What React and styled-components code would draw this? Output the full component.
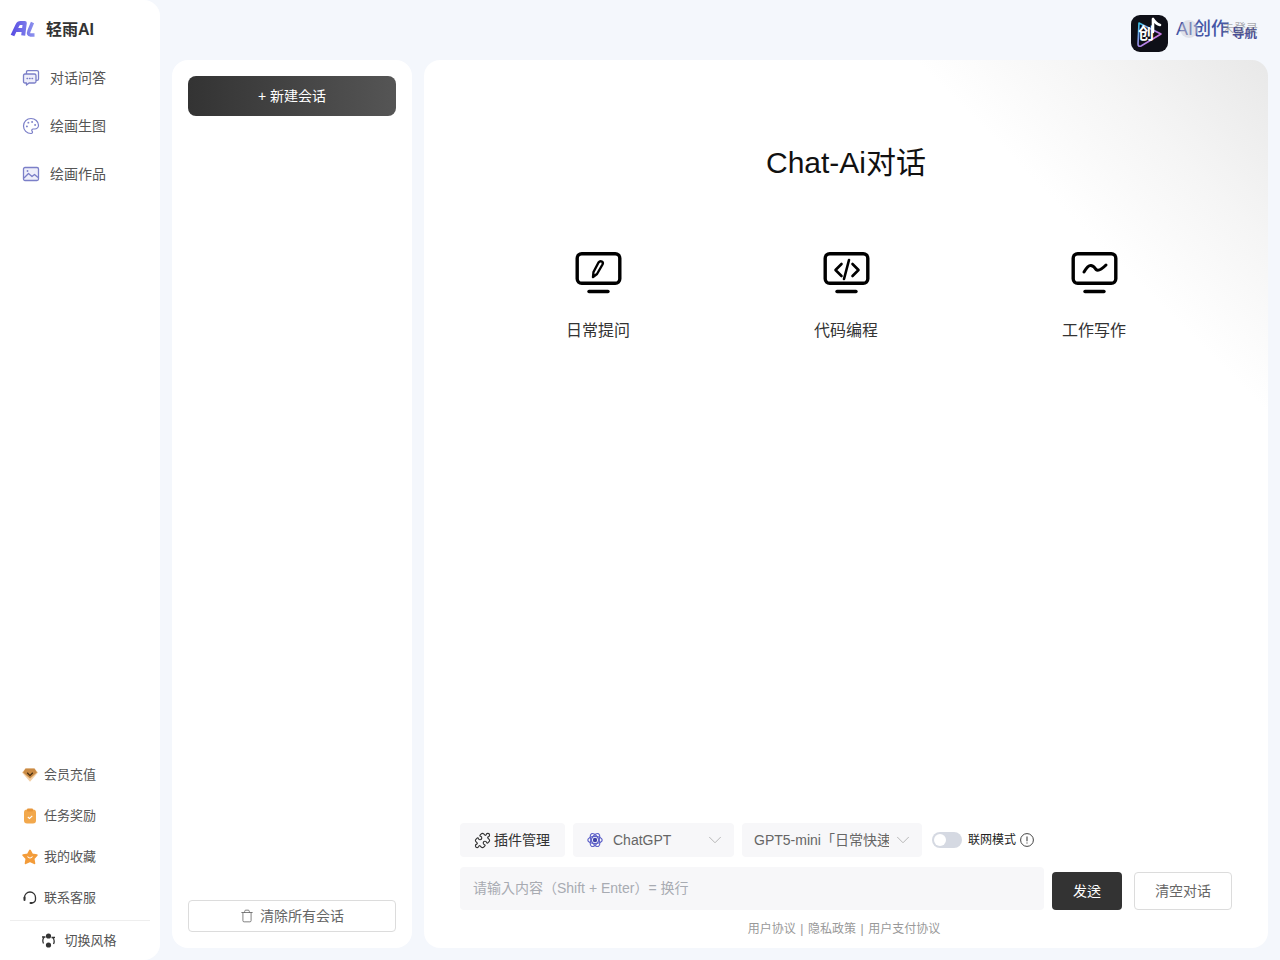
import React, { useState } from "react";
import styled, { createGlobalStyle } from "styled-components";
import { Puzzle, ChevronDown, Trash, Palette } from "lucide-react";

const GlobalStyle = createGlobalStyle`
  * {
    box-sizing: border-box;
  }
  html, body {
    margin: 0;
    padding: 0;
    height: 100%;
    background: #f4f7fc;
    font-family: "Liberation Sans", "Noto Sans CJK KR", sans-serif;
    line-height: 1.5;
  }
`;

const Page = styled.div`
  display: flex;
  width: 1280px;
  height: 960px;
  overflow: hidden;
  background: #f4f7fc;
`;

const Sidebar = styled.aside`
  display: flex;
  flex-direction: column;
  width: 160px;
  height: 100%;
  background: #fff;
  border-radius: 0 16px 16px 0;
`;

const Brand = styled.div`
  display: flex;
  align-items: center;
  gap: 10px;
  height: 54px;
  padding: 4px 0 0 10px;
  font-size: 16px;
  font-weight: 700;
  color: #333;
  span {
    padding-top: 1px;
  }
`;

const NavList = styled.nav`
  display: flex;
  flex-direction: column;
  flex: 1;
`;

const NavItem = styled.a`
  display: flex;
  align-items: center;
  gap: 10px;
  height: 48px;
  padding-left: 22px;
  font-size: 14px;
  color: #555;
  svg {
    color: #7b7fc8;
  }
`;

const BottomList = styled.div`
  display: flex;
  flex-direction: column;
`;

const BottomItem = styled.a`
  display: flex;
  align-items: center;
  gap: 6px;
  height: 41px;
  padding-left: 22px;
  font-size: 13px;
  color: #555;
`;

const Divider = styled.div`
  height: 1px;
  margin: 2px 10px 0;
  background: #eeeeee;
`;

const StyleSwitch = styled.a`
  display: flex;
  align-items: center;
  justify-content: center;
  gap: 8px;
  height: 39px;
  padding-right: 2px;
  font-size: 13px;
  color: #555;
`;

const Content = styled.main`
  display: flex;
  flex-direction: column;
  flex: 1;
  min-width: 0;
  padding: 0 12px 12px;
`;

const TopBar = styled.header`
  display: flex;
  align-items: center;
  justify-content: flex-end;
  height: 60px;
  padding: 7px 10px 0 0;
  flex-shrink: 0;
`;

const NavLogo = styled.div`
  position: relative;
  display: flex;
  align-items: center;
  gap: 8px;
`;

const LogoTile = styled.div`
  position: relative;
  display: flex;
  align-items: center;
  justify-content: center;
  width: 37px;
  height: 37px;
  border-radius: 9px;
  background: #0e0f17;
`;

const LogoChar = styled.span`
  position: absolute;
  left: 7px;
  top: 10px;
  font-size: 16px;
  font-weight: 700;
  line-height: 18px;
  color: #fff;
`;

const LogoText = styled.span`
  display: flex;
  align-items: baseline;
  width: 82px;
  margin-bottom: 8px;
  font-size: 18px;
  font-weight: 500;
  color: #4657a6;
  small {
    position: relative;
    top: 3px;
    margin-left: 3px;
    font-size: 12.5px;
    font-weight: 700;
    color: #4a4f96;
  }
`;

const GhostLogin = styled.div`
  position: absolute;
  right: 0;
  top: 5px;
  display: flex;
  align-items: center;
  gap: 24px;
  font-size: 12px;
  line-height: 14px;
  color: rgba(120, 120, 130, 0.65);
  i {
    width: 18px;
    height: 18px;
    border-radius: 50%;
    background: rgba(200, 200, 210, 0.45);
  }
`;

const Panels = styled.div`
  display: flex;
  flex: 1;
  gap: 12px;
  min-height: 0;
`;

const HistoryPanel = styled.section`
  display: flex;
  flex-direction: column;
  justify-content: space-between;
  width: 240px;
  padding: 16px;
  background: #fff;
  border-radius: 16px;
`;

const NewChat = styled.button`
  height: 40px;
  border: none;
  border-radius: 8px;
  background: linear-gradient(90deg, #333 0%, #555 100%);
  color: #fff;
  font: inherit;
  font-size: 14px;
`;

const ClearAll = styled.button`
  display: flex;
  align-items: center;
  justify-content: center;
  gap: 6px;
  height: 32px;
  border: 1px solid #dcdcdc;
  border-radius: 4px;
  background: #fff;
  color: #666;
  font: inherit;
  font-size: 14px;
`;

const ChatPanel = styled.section`
  display: flex;
  flex-direction: column;
  flex: 1;
  min-width: 0;
  padding: 0 36px 10px;
  border-radius: 16px;
  background: linear-gradient(225deg, #e8e8e8 0, #f5f5f5 130px, #fff 250px);
`;

const Title = styled.h1`
  margin: 84px 0 0;
  font-size: 30px;
  line-height: 38px;
  font-weight: 400;
  text-align: center;
  color: #111;
`;

const Prompts = styled.div`
  display: flex;
  justify-content: center;
  gap: 184px;
  margin-top: 69px;
  flex: 1;
`;

const Prompt = styled.div`
  display: flex;
  flex-direction: column;
  align-items: center;
  gap: 20px;
  width: 64px;
  height: 100px;
  font-size: 16px;
  line-height: 24px;
  color: #333;
  white-space: nowrap;
`;

const Toolbar = styled.div`
  display: flex;
  align-items: center;
  gap: 8px;
  height: 34px;
`;

const PluginButton = styled.button`
  display: flex;
  align-items: center;
  gap: 3px;
  width: 105px;
  height: 34px;
  padding: 0 0 0 14px;
  border: none;
  border-radius: 4px;
  background: #f7f7f9;
  color: #333;
  font: inherit;
  font-size: 14px;
`;

const Select = styled.div`
  display: flex;
  align-items: center;
  width: ${({ $width }) => $width}px;
  height: 34px;
  padding: 0 8px 0 12px;
  border-radius: 4px;
  background: #f7f7f9;
  color: #666;
  font-size: 14px;
  span {
    flex: 1;
    min-width: 0;
    overflow: hidden;
    white-space: nowrap;
  }
  svg.chev {
    margin-left: 3px;
    color: #aaa;
    flex-shrink: 0;
  }
  svg.brand {
    margin: 0 10px 0 2px;
  }
`;

const Toggle = styled.button`
  display: flex;
  align-items: center;
  width: 30px;
  height: 16px;
  margin-left: 2px;
  padding: 2px;
  border: none;
  border-radius: 8px;
  background: ${({ $on }) => ($on ? "#333" : "#d5d9e2")};
  justify-content: ${({ $on }) => ($on ? "flex-end" : "flex-start")};
  i {
    width: 12px;
    height: 12px;
    border-radius: 50%;
    background: #fff;
  }
`;

const ToggleLabel = styled.span`
  display: flex;
  align-items: center;
  gap: 4px;
  margin-left: -2px;
  font-size: 12px;
  color: #222;
`;

const InputRow = styled.div`
  display: flex;
  align-items: flex-end;
  margin-top: 10px;
`;

const PromptInput = styled.input`
  flex: 1;
  min-width: 0;
  height: 43px;
  padding: 0 13px 1px;
  border: none;
  border-radius: 4px;
  outline: none;
  background: #f7f7f9;
  font: inherit;
  font-size: 14px;
  color: #333;
  &::placeholder {
    color: #a8abb2;
  }
`;

const SendButton = styled.button`
  width: 70px;
  height: 38px;
  margin-left: 8px;
  border: none;
  border-radius: 4px;
  background: #333;
  color: #fff;
  font: inherit;
  font-size: 14px;
`;

const ClearButton = styled.button`
  width: 98px;
  height: 38px;
  margin-left: 12px;
  border: 1px solid #dcdcdc;
  border-radius: 4px;
  background: #fff;
  color: #666;
  font: inherit;
  font-size: 14px;
`;

const Footer = styled.div`
  display: flex;
  justify-content: center;
  margin: 10px 4px 0 0;
  font-size: 12px;
  line-height: 18px;
  color: #999;
  i {
    margin: 0 4.5px;
    font-style: normal;
  }
`;

const BrandMark = () => (
  <svg width="26" height="18" viewBox="0 0 26 18" fill="none" strokeLinejoin="round">
    <defs>
      <linearGradient id="bm" gradientUnits="userSpaceOnUse" x1="0" y1="0" x2="26" y2="0">
        <stop offset="0" stopColor="#5548e2" />
        <stop offset="1" stopColor="#8f96ee" />
      </linearGradient>
    </defs>
    <path d="M2.5 15.5 L7.5 5 Q8.5 3 10.5 3 L14.8 3 L13.2 15.5 M6.5 10 H13.6" stroke="url(#bm)" strokeWidth="4" />
    <path d="M22.5 2.5 L19 11 Q17.5 15 20.5 15 L24.5 15" stroke="url(#bm)" strokeWidth="3.4" />
  </svg>
);

const AppIcon = () => (
  <svg width="37" height="37" viewBox="0 0 37 37" fill="none">
    <defs>
      <linearGradient id="ai" x1="0" y1="0" x2="1" y2="1">
        <stop offset="0" stopColor="#38c6e8" />
        <stop offset="0.6" stopColor="#b77fe8" />
        <stop offset="1" stopColor="#e56fd0" />
      </linearGradient>
    </defs>
    <path d="M8 8 L30 19 L10 31 Q7 32 7 29 Z" stroke="url(#ai)" strokeWidth="1.6" strokeLinejoin="round" />
    <path d="M22 4 L22 17 M22 4 Q25 9 29 10" stroke="#fff" strokeWidth="2.6" strokeLinecap="round" />
  </svg>
);

const MonitorIcon = ({ children }) => (
  <svg width="48" height="48" viewBox="0 0 48 48" fill="none" stroke="#000" strokeWidth="3.4" strokeLinecap="round" strokeLinejoin="round">
    <rect x="3.2" y="2.7" width="42.6" height="29.6" rx="4.5" />
    <path d="M15 40.5 H34" />
    {children}
  </svg>
);

const ChatIcon = () => (
  <svg width="18" height="18" viewBox="0 0 18 18" fill="none" stroke="currentColor" strokeWidth="1.3" strokeLinejoin="round">
    <path d="M4.5 5 V3 Q4.5 1.7 5.8 1.7 H15 Q16.5 1.7 16.5 3 V10 Q16.5 11.3 15 11.3 H14" />
    <path d="M3 5 H12.5 Q14 5 14 6.5 V12.5 Q14 14 12.5 14 H7 L4.5 16 V14 H3 Q1.5 14 1.5 12.5 V6.5 Q1.5 5 3 5 Z" fill="#eeeefa" />
    <path d="M5 9.5 H5.6 M7.5 9.5 H8.1 M10 9.5 H10.6" strokeLinecap="round" />
  </svg>
);

const PictureIcon = () => (
  <svg width="18" height="18" viewBox="0 0 18 18" fill="none" stroke="currentColor" strokeWidth="1.3" strokeLinejoin="round">
    <rect x="1.5" y="2.5" width="15" height="13" rx="1.5" fill="#eeeefa" />
    <path d="M2 13 L6.5 8.5 L10 11.5 L12.5 9.5 L16 12.5" />
    <circle cx="5.5" cy="6" r="0.9" fill="currentColor" stroke="none" />
  </svg>
);

const DiamondIcon = () => (
  <svg width="16" height="14" viewBox="0 0 16 14">
    <path d="M3.5 0.5 H12.5 L16 4.5 L8 13.8 L0 4.5 Z" fill="#f3cfa4" />
    <path d="M3.5 0.5 H12.5 L15 4.5 L8 10.5 L1 4.5 Z" fill="#c98a44" />
    <path d="M5.2 4.8 L8 7.6 L10.8 4.8" fill="none" stroke="#4a3013" strokeWidth="1.3" />
  </svg>
);

const TaskIcon = () => (
  <svg width="16" height="16" viewBox="0 0 16 16">
    <rect x="2" y="1.5" width="12" height="14" rx="3" fill="#f2a84c" />
    <rect x="5" y="0.5" width="6" height="3" rx="1" fill="#e7963a" />
    <path d="M5.8 9 L7.5 10.5 L10.3 7.8" fill="none" stroke="#fff" strokeWidth="1.1" />
  </svg>
);

const StarIcon = () => (
  <svg width="16" height="16" viewBox="0 0 16 16">
    <path d="M8 1.5 L10.2 5.4 L14.8 6.2 L11.6 9.6 L12.4 14.3 L8 12.3 L3.6 14.3 L4.4 9.6 L1.2 6.2 L5.8 5.4 Z" fill="#f39c3a" stroke="#f39c3a" strokeWidth="1.8" strokeLinejoin="round" />
    <path d="M5.5 7.5 Q8 10.5 10.5 7.5" fill="none" stroke="#fff" strokeWidth="1.1" />
  </svg>
);

const HeadsetIcon = () => (
  <svg width="16" height="16" viewBox="0 0 16 16" fill="none" stroke="#333" strokeWidth="1.3" strokeLinecap="round">
    <path d="M2.5 9 V7.5 A5.5 5.5 0 0 1 13.5 7.5 V9.5 Q13.5 12.5 9.5 13" />
    <path d="M2.5 7.5 V10" strokeWidth="2" />
    <path d="M9.5 13 H8.5" strokeWidth="2" />
  </svg>
);

const SwitchIcon = () => (
  <svg width="15" height="15" viewBox="0 0 15 15" fill="none">
    <circle cx="7.5" cy="3" r="2.6" fill="#333" />
    <circle cx="7.5" cy="12" r="2.6" fill="#333" />
    <path d="M3.2 4 Q0.8 7 2.5 10.5 M11.8 4.5 Q14.2 8 12.5 11" stroke="#333" strokeWidth="1.3" />
    <path d="M1 4 H4.5 M10.5 4.5 H14" stroke="#333" strokeWidth="1.3" />
  </svg>
);

const ModelIcon = () => (
  <svg className="brand" width="16" height="16" viewBox="0 0 16 16" fill="none" stroke="#5f63c9" strokeWidth="1.2">
    {[0, 60, 120].map((deg) => (
      <ellipse key={deg} cx="8" cy="8" rx="7.2" ry="3.6" transform={`rotate(${deg} 8 8)`} />
    ))}
    <circle cx="8" cy="8" r="2.2" fill="#3f43a8" stroke="none" />
  </svg>
);

const InfoIcon = () => (
  <svg width="14" height="14" viewBox="0 0 14 14" fill="none" stroke="#444">
    <circle cx="7" cy="7" r="6.4" />
    <path d="M7 3.5 V8.3 M7 9.6 V10.6" strokeWidth="1.1" />
  </svg>
);

const App = () => {
  const [online, setOnline] = useState(false);

  return (
    <Page>
      <GlobalStyle />
      <Sidebar>
        <Brand>
          <BrandMark />
          <span>轻雨AI</span>
        </Brand>
        <NavList>
          <NavItem>
            <ChatIcon />
            对话问答
          </NavItem>
          <NavItem>
            <Palette size={18} strokeWidth={1.6} />
            绘画生图
          </NavItem>
          <NavItem>
            <PictureIcon />
            绘画作品
          </NavItem>
        </NavList>
        <BottomList>
          <BottomItem>
            <DiamondIcon />
            会员充值
          </BottomItem>
          <BottomItem>
            <TaskIcon />
            任务奖励
          </BottomItem>
          <BottomItem>
            <StarIcon />
            我的收藏
          </BottomItem>
          <BottomItem>
            <HeadsetIcon />
            联系客服
          </BottomItem>
          <Divider />
          <StyleSwitch>
            <SwitchIcon />
            切换风格
          </StyleSwitch>
        </BottomList>
      </Sidebar>
      <Content>
        <TopBar>
          <NavLogo>
            <LogoTile>
              <AppIcon />
              <LogoChar>创</LogoChar>
            </LogoTile>
            <LogoText>
              AI创作<small>导航</small>
            </LogoText>
            <GhostLogin>
              <i />
              未登录
            </GhostLogin>
          </NavLogo>
        </TopBar>
        <Panels>
          <HistoryPanel>
            <NewChat>+ 新建会话</NewChat>
            <ClearAll>
              <Trash size={14} strokeWidth={1.4} />
              清除所有会话
            </ClearAll>
          </HistoryPanel>
          <ChatPanel>
            <Title>Chat-Ai对话</Title>
            <Prompts>
              <Prompt>
                <MonitorIcon>
                  <path d="M24.5 11.5 Q26 9.5 27.8 10.5 Q29.5 11.5 28.5 13.5 L23 23 L19 26 L19.5 21 Z" strokeWidth="2.4" />
                </MonitorIcon>
                日常提问
              </Prompt>
              <Prompt>
                <MonitorIcon>
                  <path d="M19.5 13 L13.5 19 L19.5 25 M30.5 13 L36.5 19 L30.5 25 M27 9 L22 28" strokeWidth="2.6" />
                </MonitorIcon>
                代码编程
              </Prompt>
              <Prompt>
                <MonitorIcon>
                  <path d="M14 21 Q18 14 21 14.5 Q24 15 26 18.5 Q29 21 36 14" strokeWidth="3" />
                </MonitorIcon>
                工作写作
              </Prompt>
            </Prompts>
            <Toolbar>
              <PluginButton>
                <Puzzle size={17} strokeWidth={1.6} />
                插件管理
              </PluginButton>
              <Select $width={161}>
                <ModelIcon />
                <span>ChatGPT</span>
                <ChevronDown className="chev" size={22} strokeWidth={0.9} />
              </Select>
              <Select $width={180}>
                <span>GPT5-mini「日常快速</span>
                <ChevronDown className="chev" size={22} strokeWidth={0.9} />
              </Select>
              <Toggle $on={online} onClick={() => setOnline(!online)}>
                <i />
              </Toggle>
              <ToggleLabel>
                联网模式
                <InfoIcon />
              </ToggleLabel>
            </Toolbar>
            <InputRow>
              <PromptInput placeholder="请输入内容（Shift + Enter）= 换行" />
              <SendButton>发送</SendButton>
              <ClearButton>清空对话</ClearButton>
            </InputRow>
            <Footer>
              用户协议<i>|</i>隐私政策<i>|</i>用户支付协议
            </Footer>
          </ChatPanel>
        </Panels>
      </Content>
    </Page>
  );
};

export default App;
